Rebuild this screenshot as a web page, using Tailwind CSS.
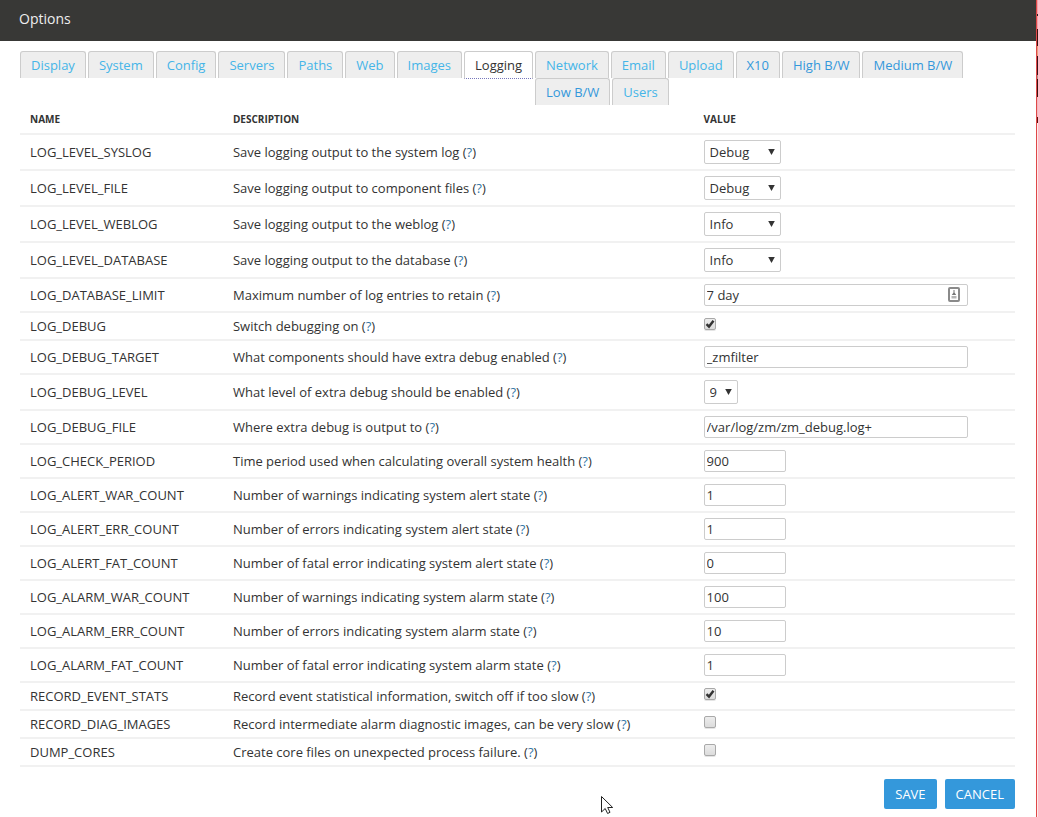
<!DOCTYPE html>
<html lang="en">
<head>
    <meta charset="UTF-8">
    <meta name="viewport" content="width=device-width, initial-scale=1.0">
    <title>Options</title>
    <script src="https://cdn.jsdelivr.net/npm/@tailwindcss/browser@4"></script>
</head>
<body class="bg-white font-['Open_Sans',sans-serif] text-[13px] leading-[18px] text-[#333333]">
<div class="relative min-h-screen pr-[2px]">

    <!-- Header -->
    <header class="bg-[#383836] px-[19px] h-[41px] flex items-center pb-1">
        <h2 class="text-sm text-[#eeeeee]">Options</h2>
    </header>

    <main class="pl-5 pr-[21px] pt-[10px]">
        <!-- Tabs -->
        <nav>
            <ul id="tabs" class="flow-root text-[13px] leading-[18px]"></ul>
        </nav>

        <form id="options-form">
            <table class="w-full table-fixed border-collapse">
                <colgroup>
                    <col class="w-[20.4%]">
                    <col class="w-[47.3%]">
                    <col>
                </colgroup>
                <thead>
                    <tr class="h-[29px] text-left text-[10px] uppercase border-b-2 border-[#f1f1f1]">
                        <th class="px-[10px] py-0 font-bold">Name</th>
                        <th class="px-[10px] py-0 font-bold">Description</th>
                        <th class="px-[10px] py-0 font-bold">Value</th>
                    </tr>
                </thead>
                <tbody id="options"></tbody>
            </table>

            <div class="flex justify-end gap-2 pt-3">
                <button type="submit" class="h-[30px] px-[11px] rounded-[2px] bg-[#3498db] text-white uppercase">Save</button>
                <button type="button" class="h-[30px] px-[11px] rounded-[2px] bg-[#3498db] text-white uppercase">Cancel</button>
            </div>
        </form>
    </main>

    <!-- Window edge, with a sliver of the window behind it -->
    <div class="absolute inset-y-0 right-0 w-[2px] bg-[#fbeaea] border-l border-[#e04848]">
        <div class="h-[14px] bg-[#f0a0a8]"></div>
        <div class="h-[2px] bg-[#222222]"></div>
        <div class="h-[13px] bg-[#f0a0a8]"></div>
        <div class="h-[17px] bg-[#3a1010]"></div>
        <div class="h-[10px] bg-[#e8a080]"></div>
        <div class="h-[19px] bg-[#3a1018]"></div>
        <div class="h-[4px] bg-[#b09090]"></div>
        <div class="h-[18px] bg-[#3a1010]"></div>
        <div class="h-[20px] bg-[#f0b8c0]"></div>
        <div class="h-[6px] bg-[#5a1010]"></div>
    </div>

    <!-- Mouse pointer -->
    <svg class="absolute left-[600px] top-[795px]" width="14" height="20" viewBox="0 0 14 20" aria-hidden="true">
        <path d="M1.5 1.5V17l3.7-3.5 2.4 5 2.4-1.2-2.3-4.8h5z" fill="#fff" stroke="#222" stroke-width="1"/>
    </svg>
</div>

<script>
    const tabs = ['Display', 'System', 'Config', 'Servers', 'Paths', 'Web', 'Images', 'Logging', 'Network',
        'Email', 'Upload', 'X10', 'High B/W', 'Medium B/W', 'Low B/W', 'Users'];
    const bright = ['X10', 'High B/W', 'Medium B/W', 'Low B/W'];

    document.getElementById('tabs').innerHTML = tabs.map(name => {
        let look = 'h-[27px] bg-[#eeeeee] text-[#45b5e8]';
        if (bright.includes(name)) look = 'h-[27px] bg-[#eeeeee] text-[#3498db]';
        if (name === 'Logging') look = 'h-[28px] bg-white text-[#333333] border-b border-b-[#7777bb] [border-bottom-style:dotted]';
        return `<li class="float-left mr-[2px]"><a href="#" class="block px-[10px] pt-1 border-t border-x border-[#cccccc] rounded-t-[3px] ${look}">${name}</a></li>`;
    }).join('');

    const options = [
        ['LOG_LEVEL_SYSLOG', 'Save logging output to the system log', 'select', 'Debug'],
        ['LOG_LEVEL_FILE', 'Save logging output to component files', 'select', 'Debug'],
        ['LOG_LEVEL_WEBLOG', 'Save logging output to the weblog', 'select', 'Info'],
        ['LOG_LEVEL_DATABASE', 'Save logging output to the database', 'select', 'Info'],
        ['LOG_DATABASE_LIMIT', 'Maximum number of log entries to retain', 'key', '7 day'],
        ['LOG_DEBUG', 'Switch debugging on', 'check', true],
        ['LOG_DEBUG_TARGET', 'What components should have extra debug enabled', 'text', '_zmfilter'],
        ['LOG_DEBUG_LEVEL', 'What level of extra debug should be enabled', 'level', '9'],
        ['LOG_DEBUG_FILE', 'Where extra debug is output to', 'text', '/var/log/zm/zm_debug.log+'],
        ['LOG_CHECK_PERIOD', 'Time period used when calculating overall system health', 'number', '900'],
        ['LOG_ALERT_WAR_COUNT', 'Number of warnings indicating system alert state', 'number', '1'],
        ['LOG_ALERT_ERR_COUNT', 'Number of errors indicating system alert state', 'number', '1'],
        ['LOG_ALERT_FAT_COUNT', 'Number of fatal error indicating system alert state', 'number', '0'],
        ['LOG_ALARM_WAR_COUNT', 'Number of warnings indicating system alarm state', 'number', '100'],
        ['LOG_ALARM_ERR_COUNT', 'Number of errors indicating system alarm state', 'number', '10'],
        ['LOG_ALARM_FAT_COUNT', 'Number of fatal error indicating system alarm state', 'number', '1'],
        ['RECORD_EVENT_STATS', 'Record event statistical information, switch off if too slow', 'check', true],
        ['RECORD_DIAG_IMAGES', 'Record intermediate alarm diagnostic images, can be very slow', 'check', false],
        ['DUMP_CORES', 'Create core files on unexpected process failure.', 'check', false],
    ];

    const rowHeight = { select: 'h-[36px]', level: 'h-[36px]', check: 'h-[28px]', key: 'h-[34px]', text: 'h-[34px]', number: 'h-[34px]' };
    const box = 'block h-[22px] px-[2px] border border-[#cccccc] rounded-[2px] bg-white';

    function select(id, value, width) {
        return `<div class="relative ${width}">
            <select id="${id}" class="block appearance-none w-full h-[24px] pl-[5px] border border-[#cccccc] rounded-[2px] bg-white"><option>${value}</option></select>
            <svg class="absolute right-[6px] top-[9px] pointer-events-none" width="7" height="6" viewBox="0 0 7 6"><path d="M0.2 0h6.6L3.5 6z" fill="#333"/></svg>
        </div>`;
    }

    function control(id, type, value) {
        if (type === 'select') return select(id, value, 'w-[77px]');
        if (type === 'level') return select(id, value, 'w-[34px]');
        if (type === 'number') return `<input id="${id}" type="text" value="${value}" class="${box} w-[82px]">`;
        if (type === 'text') return `<input id="${id}" type="text" value="${value}" class="${box} w-[264px]">`;
        if (type === 'key') return `<div class="relative w-[264px]">
            <input id="${id}" type="text" value="${value}" class="${box} w-full">
            <svg class="absolute right-[8px] top-[3px]" width="12" height="16" viewBox="0 0 12 16">
                <rect x="1" y="1" width="10" height="13" rx="1" fill="#fff" stroke="#8a8a8a" stroke-width="2"/>
                <path d="M5.5 3h1v2.500l1.700 2.500H3.800l1.700-2.500z" fill="#777"/>
                <path d="M3.500 9h5v2.500h-5z" fill="#b5b5b5"/>
            </svg>
        </div>`;
        return `<div class="relative size-3 mb-1">
            <input id="${id}" type="checkbox" ${value ? 'checked' : ''} class="peer block appearance-none size-3 border border-[#a9a9a9] rounded-[2px] bg-linear-to-b from-[#ededed] to-[#dcdcdc] shadow-[0_1px_0_#e4e4e4]">
            <svg class="absolute inset-0 hidden peer-checked:block pointer-events-none" width="12" height="12" viewBox="0 0 12 12"><path d="M2.5 6.2L5 8.6 9.5 2.8" fill="none" stroke="#333" stroke-width="2.4"/></svg>
        </div>`;
    }

    document.getElementById('options').innerHTML = options.map(([name, text, type, value]) => `
        <tr class="border-b-2 border-[#f1f1f1] ${rowHeight[type]}">
            <td class="px-[10px] py-0"><label for="${name}">${name}</label></td>
            <td class="px-[10px] py-0">${text} (<a href="#" class="text-[#3477a8]">?</a>)</td>
            <td class="px-[10px] py-0">${control(name, type, value)}</td>
        </tr>`).join('');
</script>
</body>
</html>
